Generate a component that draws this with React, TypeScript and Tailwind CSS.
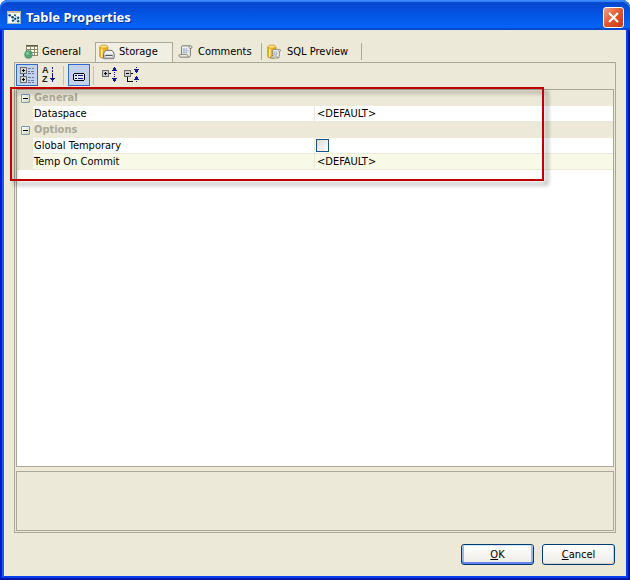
import { useState } from 'react'
import type { ReactNode } from 'react'
import clsx from 'clsx'

interface Property {
  name: string
  value: string | boolean
  active?: boolean
}

interface Category {
  title: string
  properties: Property[]
}

const categories: Category[] = [
  {
    title: 'General',
    properties: [{ name: 'Dataspace', value: '<DEFAULT>' }],
  },
  {
    title: 'Options',
    properties: [
      { name: 'Global Temporary', value: false },
      { name: 'Temp On Commit', value: '<DEFAULT>', active: true },
    ],
  },
]

/* ---------- icons ---------- */

function WindowIcon() {
  return (
    <svg width="14" height="13" viewBox="0 0 14 13" aria-hidden="true">
      <rect width="14" height="13" fill="#9db4c6" />
      <rect x="1" y="2" width="12" height="10" fill="#fbfdfe" />
      <rect width="14" height="2" fill="#c4bfa6" />
      <path d="M2.500 4l3 2.500 2.500 1.500M5.500 9l2.500 1 3.500 0M7.500 4l3.500 3v3" fill="none" stroke="#7fb0cd" strokeWidth=".8" />
      <g fill="#0f4c80">
        <circle cx="2.600" cy="4.200" r="1.300" />
        <circle cx="5.600" cy="6.200" r="1.300" />
        <circle cx="8.200" cy="7.800" r="1.200" />
        <circle cx="6" cy="9.600" r="1.200" />
        <circle cx="8" cy="4.200" r="1" />
        <circle cx="11.200" cy="6.800" r="1.200" />
        <circle cx="11.200" cy="10.200" r="1.200" />
      </g>
    </svg>
  )
}

function TableIcon() {
  return (
    <svg width="16" height="16" viewBox="0 0 16 16" aria-hidden="true">
      <g shapeRendering="crispEdges">
        <rect x="4" y="1" width="12" height="11" fill="#8b8767" />
        <rect x="4" y="1" width="12" height="1" fill="#5f5b43" />
        <path
          d="M5 3h3v2h-3zM9 3h3v2h-3zM13 3h2v2h-2zM5 6h3v2h-3zM9 6h3v2h-3zM13 6h2v2h-2zM9 9h3v2h-3zM13 9h2v2h-2z"
          fill="#fffef4"
        />
      </g>
      <circle cx="6.500" cy="10.500" r="3.900" fill="#56a877" stroke="#3f8f62" strokeWidth=".6" />
      <circle cx="5.400" cy="9.400" r="1.400" fill="#8fd0a6" />
    </svg>
  )
}

function Cylinder() {
  return (
    <>
      <path d="M.8 2.800v9.600c0 1 1.900 1.800 4 1.800s4-.8 4-1.800V2.800z" fill="#f0b323" stroke="#b9861a" strokeWidth=".8" />
      <path d="M2 4.500v8.200c.5.400 1 .5 1.500.6V4.800z" fill="#fff3b0" />
      <ellipse cx="4.800" cy="2.600" rx="4" ry="1.600" fill="#ffe27a" stroke="#c99a24" strokeWidth=".8" />
    </>
  )
}

function StorageIcon() {
  return (
    <svg width="16" height="16" viewBox="0 0 16 16" aria-hidden="true">
      <Cylinder />
      <path
        d="M4.500 10.500c0-1 .5-2 1.400-3.200.5-.7 1-1 1.800-1h4.300c.8 0 1.300.3 1.800 1 .9 1.200 1.400 2.200 1.400 3.200v3c0 .8-.4 1.200-1.200 1.200H5.700c-.8 0-1.200-.4-1.200-1.200z"
        fill="#eff0f2"
        stroke="#5d5d63"
        strokeWidth=".9"
      />
      <path d="M5 10.500h9.800v3c0 .5-.3.800-.8.800H5.800c-.5 0-.8-.3-.8-.8z" fill="#b3b4ba" />
      <path d="M6.500 11.500h6.800" stroke="#55565e" />
      <path d="M6.500 12.600h6.800" stroke="#f7f7f7" />
    </svg>
  )
}

function Scroll() {
  return (
    <>
      <path
        d="M4.500 2h9c1.200 0 1.700.8 1.700 1.600s-.6 1.200-1.200 1.200h-.6v7.500c0 1.300-.7 2-1.700 2H3c-1.200 0-1.800-.8-1.800-1.600s.6-1.200 1.200-1.200h1.500V4.500c0-1.400-.3-1.800.6-2.500z"
        fill="#f1f1ec"
        stroke="#6e6e5f"
      />
      <path d="M3.900 11.500h6.200c.5 0 .3 2.500 1.500 2.700M12.500 2.300c-.6.500-.7 1.500 0 2.400h1" fill="none" stroke="#6e6e5f" strokeWidth=".8" />
      <path d="M5.500 5.500h5M5.500 7.500h6M5.500 9.500h5" stroke="#7288c4" strokeDasharray="2 .6" />
    </>
  )
}

function CommentsIcon() {
  return (
    <svg width="16" height="16" viewBox="0 0 16 16" aria-hidden="true">
      <g transform="translate(0 0) scale(.92)">
        <Scroll />
      </g>
    </svg>
  )
}

function SqlIcon() {
  return (
    <svg width="16" height="16" viewBox="0 0 16 16" aria-hidden="true">
      <Cylinder />
      <g transform="translate(3 4) scale(.7)">
        <Scroll />
      </g>
    </svg>
  )
}

function CategorizedIcon() {
  return (
    <svg width="20" height="20" viewBox="0 0 20 20" shapeRendering="crispEdges" aria-hidden="true">
      <path d="M3 2h7v7h-7zM3 11h7v7h-7z" fill="#6b6b6b" />
      <path d="M4 3h5v5h-5zM4 12h5v5h-5z" fill="#d6d6d6" />
      <path d="M6 4h1v1h1v1h-1v1h-1v-1h-1v-1h1zM6 13h1v1h1v1h-1v1h-1v-1h-1v-1h1zM6 9h1v2h-1z" fill="#000" />
      <path
        d="M11 3h3v1h-3zM15 3h2v1h-2zM11 6h2v1h-2zM14 6h3v1h-3zM11 8h3v1h-3zM15 8h2v1h-2zM11 12h3v1h-3zM15 12h2v1h-2zM11 15h2v1h-2zM14 15h3v1h-3zM11 17h3v1h-3zM15 17h2v1h-2z"
        fill="#6d7890"
      />
    </svg>
  )
}

function SortIcon() {
  return (
    <svg width="20" height="20" viewBox="0 0 20 20" aria-hidden="true">
      <g fontFamily="Liberation Sans, Arial, sans-serif" fontSize="9" fontWeight="bold" fill="#222">
        <text x="3" y="8">A</text>
        <text x="3" y="17">Z</text>
      </g>
      <path
        d="M13 2h1v2h-1zM13 5h1v2h-1zM13 8h1v5h-1zM11 13h5v1h-1v1h-1v2h-1v-2h-1v-1h-1z"
        fill="#16168c"
        shapeRendering="crispEdges"
      />
    </svg>
  )
}

function DescriptionIcon() {
  return (
    <svg width="20" height="20" viewBox="0 0 20 20" shapeRendering="crispEdges" aria-hidden="true">
      <path d="M5 8h10v1h1v6h-1v1h-10v-1h-1v-6h1z" fill="#000" />
      <path d="M5 9h10v6h-10z" fill="#dbe6fb" />
      <path d="M6 10h2v1h-2zM6 13h2v1h-2z" fill="#000" />
      <path d="M9 10h5v1h-5zM9 13h5v1h-5z" fill="#16168c" />
    </svg>
  )
}

function ExpandIcon() {
  return (
    <svg width="20" height="20" viewBox="0 0 20 20" shapeRendering="crispEdges" aria-hidden="true">
      <path d="M2 5h7v7h-7z" fill="#6b6b6b" />
      <path d="M3 6h5v5h-5z" fill="#cfcfcf" />
      <path d="M5 7h1v1h1v1h-1v1h-1v-1h-1v-1h1zM9 8h2v1h-2z" fill="#000" />
      <path
        d="M14 2h1v1h1v2h1v1h-5v-1h1v-2h1zM14 7h1v1h-1zM14 9h1v1h-1zM14 11h1v1h-1zM12 13h5v1h-1v2h-1v1h-1v-1h-1v-2h-1z"
        fill="#16168c"
      />
    </svg>
  )
}

function CollapseIcon() {
  return (
    <svg width="20" height="20" viewBox="0 0 20 20" shapeRendering="crispEdges" aria-hidden="true">
      <path d="M2 5h7v7h-7z" fill="#6b6b6b" />
      <path d="M3 6h5v5h-5z" fill="#cfcfcf" />
      <path d="M4 8h3v1h-3zM9 8h2v1h-2zM5 12h1v4h5v1h-6z" fill="#000" />
      <path
        d="M14 2h1v1h-1zM12 4h5v1h-1v2h-1v1h-1v-1h-1v-2h-1zM14 11h1v1h1v2h1v1h-5v-1h1v-2h1zM14 16h1v1h-1z"
        fill="#16168c"
      />
    </svg>
  )
}

/* ---------- parts ---------- */

function TitleBar() {
  return (
    <header className="flex h-[30px] shrink-0 items-center rounded-t-lg bg-linear-to-b from-[#0842c8] via-[#0355e4] to-[#0766fb] pt-1 pr-[6px] pl-[7px] shadow-[inset_0_2px_1px_#3a8bf8,inset_0_-2px_1px_#0348d0]">
      <WindowIcon />
      <h1 className="ml-[5px] flex-1 font-['Noto_Sans',sans-serif] text-[13px] leading-4 font-bold text-white [text-shadow:1px_1px_0_#0a2f8c]">
        Table Properties
      </h1>
      <button
        type="button"
        aria-label="Close"
        className="flex size-[21px] items-center justify-center rounded-[3px] border border-white bg-linear-to-br from-[#f0a080] via-[#e2552c] to-[#c53a10]"
      >
        <svg width="11" height="11" viewBox="0 0 11 11" aria-hidden="true">
          <path d="M1 1l9 9M10 1l-9 9" stroke="#fff" strokeWidth="2.200" />
        </svg>
      </button>
    </header>
  )
}

interface TabProps {
  label: string
  icon: ReactNode
  className: string
  selected?: boolean
}

function Tab({ label, icon, className, selected }: TabProps) {
  return (
    <button
      type="button"
      role="tab"
      aria-selected={!!selected}
      className={clsx(
        'flex shrink-0 items-center gap-1',
        selected
          ? '-mb-px h-[21px] border border-b-0 border-[#aca899] bg-[#f1efe4] pb-[2px] pl-[3px]'
          : 'mb-[2px] h-[17px] border-[#aca899] pl-[5px]',
        className,
      )}
    >
      {icon}
      <span>{label}</span>
    </button>
  )
}

interface ToolButtonProps {
  label: string
  pressed?: boolean
  onClick?: () => void
  children: ReactNode
}

function ToolButton({ label, pressed, onClick, children }: ToolButtonProps) {
  return (
    <button
      type="button"
      aria-label={label}
      aria-pressed={pressed}
      onClick={onClick}
      className={clsx(
        'size-[22px] border',
        pressed ? 'border-[#316ac5] bg-[#c1d2ee]' : 'border-transparent',
      )}
    >
      {children}
    </button>
  )
}

function ToolSeparator() {
  return <div className="mx-[3px] h-[19px] w-px bg-[#c5c2b2]" />
}

interface CategoryRowsProps {
  category: Category
  open: boolean
  onToggle: () => void
}

function CategoryRows({ category, open, onToggle }: CategoryRowsProps) {
  return (
    <tbody>
      <tr className="h-4 bg-[#ece9d8]">
        <td className="p-0">
          <button
            type="button"
            aria-label={`Toggle ${category.title}`}
            aria-expanded={open}
            onClick={onToggle}
            className="ml-1 flex size-[9px] items-center justify-center rounded-[1px] border border-[#7898b5] bg-linear-to-br from-white to-[#d5d1c4]"
          >
            <span className="relative h-px w-[5px] bg-black">
              {!open && <span className="absolute -top-[2px] left-[2px] h-[5px] w-px bg-black" />}
            </span>
          </button>
        </td>
        <th colSpan={2} className="p-0 pl-px text-left font-bold text-[#aca899]">
          {category.title}
        </th>
      </tr>
      {open &&
        category.properties.map((property) => {
          const id = property.name.toLowerCase().replace(/ /g, '-')
          return (
            <tr key={property.name} className={clsx('h-4', property.active ? 'bg-[#f9f9e8]' : 'bg-white')}>
              <td className="bg-[#ece9d8] p-0" />
              <td className="border-r border-b border-[#ece9d8] p-0 pl-px">
                <label htmlFor={id}>{property.name}</label>
              </td>
              <td className="border-b border-[#ece9d8] p-0 pl-px">
                {typeof property.value === 'boolean' ? (
                  <input
                    id={id}
                    type="checkbox"
                    defaultChecked={property.value}
                    className="block size-[13px] appearance-none border border-[#1c5180] bg-linear-to-br from-[#dcdcd7] to-white checked:bg-[#21a121]"
                  />
                ) : (
                  <input
                    id={id}
                    type="text"
                    defaultValue={property.value}
                    className="block h-[15px] w-full bg-transparent pl-px outline-none"
                  />
                )}
              </td>
            </tr>
          )
        })}
    </tbody>
  )
}

interface DialogButtonProps {
  accessKey: string
  rest: string
  primary?: boolean
}

function DialogButton({ accessKey, rest, primary }: DialogButtonProps) {
  return (
    <button
      type="button"
      className={clsx(
        'h-[21px] w-[73px] rounded-[3px] border border-[#003c74] bg-linear-to-b from-white to-[#ecebe6]',
        primary
          ? 'shadow-[inset_0_1px_0_#cee7ff,inset_0_-2px_0_#6982ee,inset_2px_0_0_#98b8ea,inset_-2px_0_0_#98b8ea]'
          : 'shadow-[inset_-1px_-1px_0_#d6d0c5]',
      )}
    >
      <span className="underline">{accessKey}</span>
      {rest}
    </button>
  )
}

export default function App() {
  const [collapsed, setCollapsed] = useState<string[]>([])

  const toggle = (title: string) => {
    setCollapsed((current) =>
      current.includes(title) ? current.filter((item) => item !== title) : [...current, title],
    )
  }

  return (
    <div className="flex min-h-screen flex-col rounded-t-lg bg-[#0341d8] font-['DejaVu_Sans_Condensed','DejaVu_Sans',sans-serif] text-[11px] leading-[14px] text-black">
      <TitleBar />
      <div className="flex flex-1 flex-col border-x-2 border-b-2 border-r-[#0014a0] border-b-[#0014a0] border-l-[#0019cf]">
        <main className="flex flex-1 flex-col border-x-2 border-b-2 border-r-[#0340f0] border-b-[#0340f0] border-l-[#1560f0] bg-[#ece9d8] px-[10px] pt-3 pb-[11px]">
          <div role="tablist" className="flex items-end pl-[3px]">
            <Tab label="General" icon={<TableIcon />} className="w-[78px]" />
            <Tab label="Storage" icon={<StorageIcon />} className="w-[78px]" selected />
            <Tab label="Comments" icon={<CommentsIcon />} className="w-[89px] border-r" />
            <Tab label="SQL Preview" icon={<SqlIcon />} className="w-[100px] border-r" />
          </div>

          <section className="flex flex-1 flex-col border border-[#aca899] p-px">
            <div role="toolbar" className="flex h-[25px] items-center pb-[3px]">
              <ToolButton label="Categorized" pressed>
                <CategorizedIcon />
              </ToolButton>
              <ToolButton label="Alphabetical">
                <SortIcon />
              </ToolButton>
              <ToolSeparator />
              <div className="flex pl-px">
                <ToolButton label="Description" pressed>
                  <DescriptionIcon />
                </ToolButton>
              </div>
              <ToolSeparator />
              <div className="flex pl-[2px]">
                <ToolButton label="Expand all" onClick={() => setCollapsed([])}>
                  <ExpandIcon />
                </ToolButton>
                <ToolButton label="Collapse all" onClick={() => setCollapsed(categories.map((c) => c.title))}>
                  <CollapseIcon />
                </ToolButton>
              </div>
            </div>

            <div className="relative flex-1 border border-[#aca899] bg-white">
              <table className="w-full table-fixed border-separate border-spacing-0">
                <colgroup>
                  <col className="w-4" />
                  <col className="w-[282px]" />
                  <col />
                </colgroup>
                {categories.map((category) => (
                  <CategoryRows
                    key={category.title}
                    category={category}
                    open={!collapsed.includes(category.title)}
                    onToggle={() => toggle(category.title)}
                  />
                ))}
              </table>
              {/* highlight frame around the property rows */}
              <div className="pointer-events-none absolute -top-[3px] right-[69px] -left-[7px] h-[94px] border-2 border-[#c00000] drop-shadow-[4px_4px_2px_rgba(0,0,0,0.4)]" />
            </div>

            <div className="mt-1 h-[60px] border border-[#aca899]" />
          </section>

          <footer className="mt-[11px] flex justify-end gap-2 pr-px">
            <DialogButton accessKey="O" rest="K" primary />
            <DialogButton accessKey="C" rest="ancel" />
          </footer>
        </main>
      </div>
    </div>
  )
}
